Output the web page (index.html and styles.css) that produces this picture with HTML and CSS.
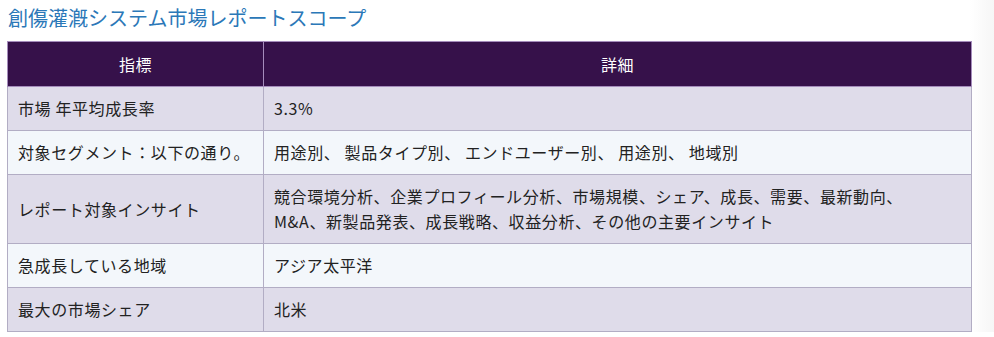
FILE: index.html
```html
<!DOCTYPE html>
<html lang="ja">
<head>
<meta charset="utf-8">
<link rel="stylesheet" href="styles.css">
</head>
<body>
<div class="page">
<h2 class="title">創傷灌漑システム市場レポートスコープ</h2>
<table class="scope">
<thead>
<tr><th class="c1">指標</th><th>詳細</th></tr>
</thead>
<tbody>
<tr class="odd"><td>市場 年平均成長率</td><td>3.3%</td></tr>
<tr class="even"><td>対象セグメント：以下の通り。</td><td>用途別、 製品タイプ別、 エンドユーザー別、 用途別、 地域別</td></tr>
<tr class="odd"><td>レポート対象インサイト</td><td>競合環境分析、企業プロフィール分析、市場規模、シェア、成長、需要、最新動向、<br>M&amp;A、新製品発表、成長戦略、収益分析、その他の主要インサイト</td></tr>
<tr class="even"><td>急成長している地域</td><td>アジア太平洋</td></tr>
<tr class="odd"><td>最大の市場シェア</td><td>北米</td></tr>
</tbody>
</table>
</div>
</body>
</html>
```
FILE: styles.css
```css
html, body {
  margin: 0;
  padding: 0;
  background: #ffffff;
}
body {
  font-family: "Noto Sans CJK JP", "Noto Sans", sans-serif;
  color: #222;
}
.page {
  padding: 4px 22px 0 7px;
  background: linear-gradient(to right, #fff 970px, #f6f6f6 994px);
}
.title {
  margin: 0 0 10px 1px;
  font-size: 20px;
  font-weight: 400;
  line-height: 27px;
  color: #2b78b8;
}
.scope {
  width: 965px;
  border-collapse: collapse;
  font-size: 16px;
  line-height: 25px;
  letter-spacing: 0.6px;
}
.scope th, .scope td {
  border: 1px solid #b2adc4;
  padding: 9px 10px;
  text-align: left;
  vertical-align: middle;
  font-weight: 400;
}
.scope th {
  background: #36114a;
  color: #ffffff;
  text-align: center;
  padding: 10px 10px 9px;
  border-color: #a58cbc;
}
.scope th.c1 {
  width: 235px;
}
.scope .odd td {
  background: #dfdcea;
}
.scope .even td {
  background: #f3f7fb;
}
```
